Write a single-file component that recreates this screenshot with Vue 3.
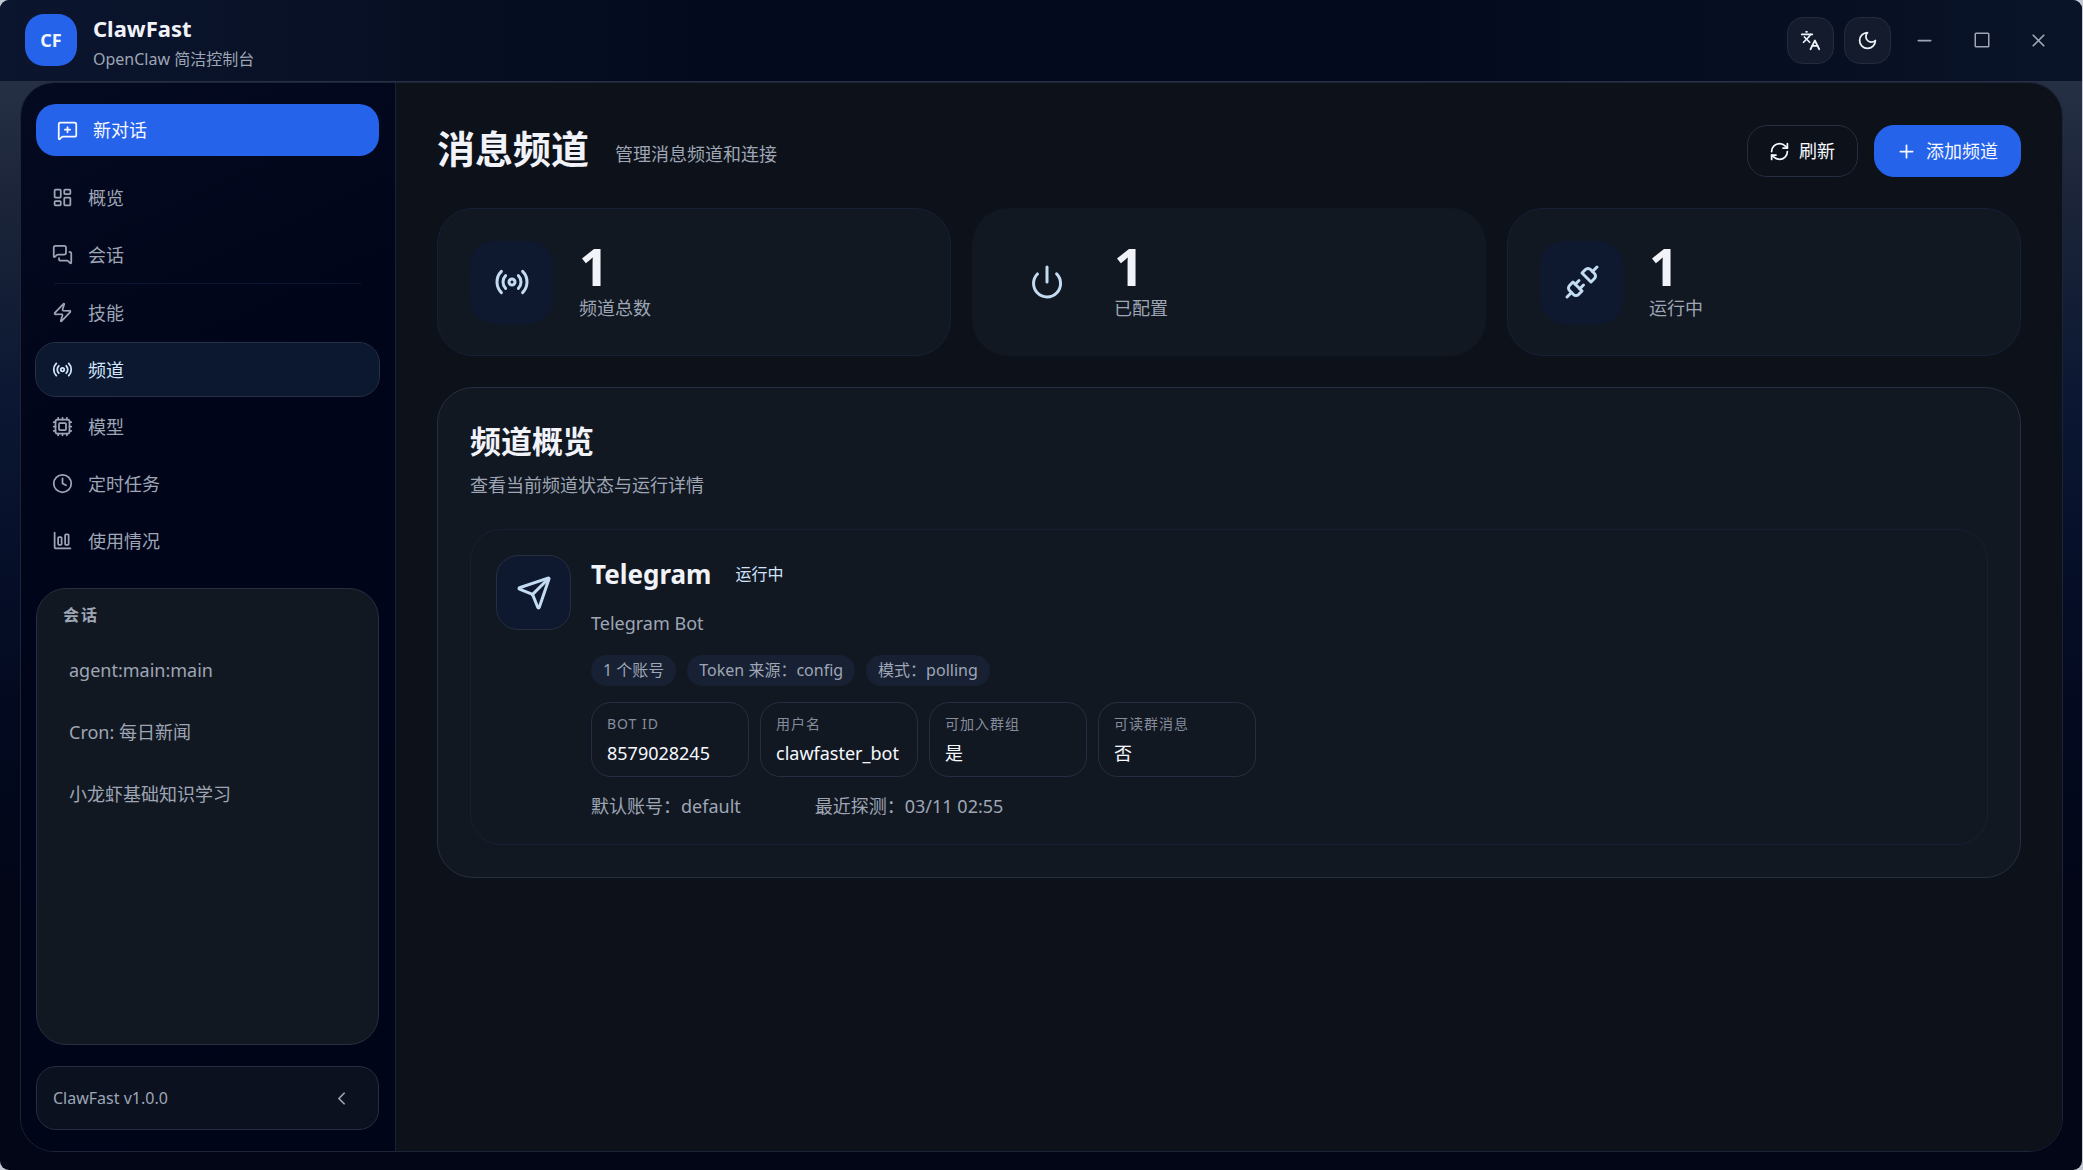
<script setup>
const icons = {
  newChat: ['M22 17a2 2 0 0 1-2 2H6.828a2 2 0 0 0-1.414.586l-2.202 2.202A.71.71 0 0 1 2 21.286V5a2 2 0 0 1 2-2h16a2 2 0 0 1 2 2z', 'M12 8v6', 'M9 11h6'],
  overview: ['M4 3h5a1 1 0 0 1 1 1v7a1 1 0 0 1-1 1H4a1 1 0 0 1-1-1V4a1 1 0 0 1 1-1z', 'M15 3h5a1 1 0 0 1 1 1v3a1 1 0 0 1-1 1h-5a1 1 0 0 1-1-1V4a1 1 0 0 1 1-1z', 'M15 12h5a1 1 0 0 1 1 1v7a1 1 0 0 1-1 1h-5a1 1 0 0 1-1-1v-7a1 1 0 0 1 1-1z', 'M4 16h5a1 1 0 0 1 1 1v3a1 1 0 0 1-1 1H4a1 1 0 0 1-1-1v-3a1 1 0 0 1 1-1z'],
  chats: ['M16 10a2 2 0 0 1-2 2H6.828a2 2 0 0 0-1.414.586l-2.202 2.202A.71.71 0 0 1 2 14.286V4a2 2 0 0 1 2-2h10a2 2 0 0 1 2 2z', 'M20 9a2 2 0 0 1 2 2v10.286a.71.71 0 0 1-1.212.502l-2.202-2.202A2 2 0 0 0 17.172 19H10a2 2 0 0 1-2-2v-1'],
  zap: ['M4 14a1 1 0 0 1-.78-1.63l9.9-10.2a.5.5 0 0 1 .86.46l-1.92 6.02A1 1 0 0 0 13 10h7a1 1 0 0 1 .78 1.63l-9.9 10.2a.5.5 0 0 1-.86-.46l1.92-6.02A1 1 0 0 0 11 14z'],
  radio: ['M16.247 7.761a6 6 0 0 1 0 8.478', 'M19.075 4.933a10 10 0 0 1 0 14.134', 'M4.925 19.067a10 10 0 0 1 0-14.134', 'M7.753 16.239a6 6 0 0 1 0-8.478', 'M14 12a2 2 0 1 1-4 0 2 2 0 0 1 4 0z'],
  cpu: ['M6 4h12a2 2 0 0 1 2 2v12a2 2 0 0 1-2 2H6a2 2 0 0 1-2-2V6a2 2 0 0 1 2-2z', 'M9 8h6a1 1 0 0 1 1 1v6a1 1 0 0 1-1 1H9a1 1 0 0 1-1-1V9a1 1 0 0 1 1-1z', 'M12 20v2', 'M12 2v2', 'M17 20v2', 'M17 2v2', 'M7 20v2', 'M7 2v2', 'M2 12h2', 'M2 17h2', 'M2 7h2', 'M20 12h2', 'M20 17h2', 'M20 7h2'],
  clock: ['M22 12a10 10 0 1 1-20 0 10 10 0 0 1 20 0z', 'M12 6v6l4 2'],
  chart: ['M3 3v16a2 2 0 0 0 2 2h16', 'M16 5h2a1 1 0 0 1 1 1v10a1 1 0 0 1-1 1h-2a1 1 0 0 1-1-1V6a1 1 0 0 1 1-1z', 'M8 8h2a1 1 0 0 1 1 1v7a1 1 0 0 1-1 1H8a1 1 0 0 1-1-1V9a1 1 0 0 1 1-1z'],
  languages: ['m5 8 6 6', 'm4 14 6-6 2-3', 'M2 5h12', 'M7 2h1', 'm22 22-5-10-5 10', 'M14 18h6'],
  moon: ['M12 3a6 6 0 0 0 9 9 9 9 0 1 1-9-9Z'],
  minimize: ['M5 12h14'],
  maximize: ['M4 3h16a1 1 0 0 1 1 1v16a1 1 0 0 1-1 1H4a1 1 0 0 1-1-1V4a1 1 0 0 1 1-1z'],
  close: ['M18 6 6 18', 'm6 6 12 12'],
  refresh: ['M3 12a9 9 0 0 1 9-9 9.75 9.75 0 0 1 6.74 2.74L21 8', 'M21 3v5h-5', 'M21 12a9 9 0 0 1-9 9 9.75 9.75 0 0 1-6.74-2.74L3 16', 'M8 16H3v5'],
  plus: ['M5 12h14', 'M12 5v14'],
  power: ['M12 2v10', 'M18.4 6.6a9 9 0 1 1-12.77.04'],
  unplug: ['m19 5 3-3', 'm2 22 3-3', 'M6.3 20.3a2.4 2.4 0 0 0 3.4 0L12 18l-6-6-2.3 2.3a2.4 2.4 0 0 0 0 3.4Z', 'M7.5 13.5 10 11', 'M10.5 16.5 13 14', 'm12 6 6 6 2.3-2.3a2.4 2.4 0 0 0 0-3.4l-2.6-2.6a2.4 2.4 0 0 0-3.4 0Z'],
  send: ['M14.536 21.686a.5.5 0 0 0 .937-.024l6.5-19a.496.496 0 0 0-.635-.635l-19 6.5a.5.5 0 0 0-.024.937l7.93 3.18a2 2 0 0 1 1.112 1.11z', 'm21.854 2.147-10.94 10.939'],
  chevron: ['m15 18-6-6 6-6'],
}

const nav = [
  { icon: 'overview', label: '概览' },
  { icon: 'chats', label: '会话', divider: true },
  { icon: 'zap', label: '技能' },
  { icon: 'radio', label: '频道', active: true },
  { icon: 'cpu', label: '模型' },
  { icon: 'clock', label: '定时任务' },
  { icon: 'chart', label: '使用情况' },
]

const sessions = ['agent:main:main', 'Cron: 每日新闻', '小龙虾基础知识学习']

const windowButtons = [
  { icon: 'languages', label: '切换语言', framed: true },
  { icon: 'moon', label: '切换主题', framed: true },
  { icon: 'minimize', label: '最小化' },
  { icon: 'maximize', label: '最大化' },
  { icon: 'close', label: '关闭' },
]

const stats = [
  { icon: 'radio', value: 1, label: '频道总数', tinted: true },
  { icon: 'power', value: 1, label: '已配置' },
  { icon: 'unplug', value: 1, label: '运行中', tinted: true },
]

const chips = ['1 个账号', 'Token 来源：config', '模式：polling']

const facts = [
  { label: 'BOT ID', value: '8579028245' },
  { label: '用户名', value: 'clawfaster_bot' },
  { label: '可加入群组', value: '是' },
  { label: '可读群消息', value: '否' },
]
</script>

<template>
  <div class="window">
    <header class="titlebar">
      <div class="logo">CF</div>
      <div class="brand">
        <strong>ClawFast</strong>
        <span>OpenClaw 简洁控制台</span>
      </div>
      <div class="window-actions">
        <button
          v-for="b in windowButtons"
          :key="b.icon"
          type="button"
          class="window-btn"
          :class="[{ framed: b.framed }, b.icon]"
          :aria-label="b.label"
        >
          <svg class="icon" viewBox="0 0 24 24"><path v-for="d in icons[b.icon]" :key="d" :d="d" /></svg>
        </button>
      </div>
    </header>

    <div class="frame">
      <aside class="sidebar">
        <button type="button" class="new-chat">
          <svg class="icon" viewBox="0 0 24 24"><path v-for="d in icons.newChat" :key="d" :d="d" /></svg>
          新对话
        </button>

        <nav class="nav">
          <template v-for="n in nav" :key="n.label">
            <a href="#" class="nav-item" :class="{ active: n.active }">
              <svg class="icon" viewBox="0 0 24 24"><path v-for="d in icons[n.icon]" :key="d" :d="d" /></svg>
              {{ n.label }}
            </a>
            <div v-if="n.divider" class="nav-divider"></div>
          </template>
        </nav>

        <section class="sessions">
          <h2>会话</h2>
          <a v-for="s in sessions" :key="s" href="#">{{ s }}</a>
        </section>

        <footer class="version">
          <span>ClawFast v1.0.0</span>
          <button type="button" aria-label="收起侧栏">
            <svg class="icon" viewBox="0 0 24 24"><path v-for="d in icons.chevron" :key="d" :d="d" /></svg>
          </button>
        </footer>
      </aside>

      <main class="page">
        <div class="page-head">
          <h1>消息频道</h1>
          <p>管理消息频道和连接</p>
          <div class="page-actions">
            <button type="button" class="btn">
              <svg class="icon" viewBox="0 0 24 24"><path v-for="d in icons.refresh" :key="d" :d="d" /></svg>
              刷新
            </button>
            <button type="button" class="btn primary">
              <svg class="icon" viewBox="0 0 24 24"><path v-for="d in icons.plus" :key="d" :d="d" /></svg>
              添加频道
            </button>
          </div>
        </div>

        <div class="stats">
          <div v-for="s in stats" :key="s.label" class="stat" :class="{ tinted: s.tinted }">
            <div class="stat-icon">
              <svg class="icon large" viewBox="0 0 24 24"><path v-for="d in icons[s.icon]" :key="d" :d="d" /></svg>
            </div>
            <div class="stat-text">
              <strong>{{ s.value }}</strong>
              <span>{{ s.label }}</span>
            </div>
          </div>
        </div>

        <section class="overview">
          <h2>频道概览</h2>
          <p>查看当前频道状态与运行详情</p>

          <article class="channel">
            <div class="channel-icon">
              <svg class="icon large" viewBox="0 0 24 24"><path v-for="d in icons.send" :key="d" :d="d" /></svg>
            </div>
            <div class="channel-body">
              <div class="channel-title">
                <h3>Telegram</h3>
                <span>运行中</span>
              </div>
              <p class="channel-desc">Telegram Bot</p>
              <ul class="chips">
                <li v-for="c in chips" :key="c">{{ c }}</li>
              </ul>
              <dl class="facts">
                <div v-for="f in facts" :key="f.label">
                  <dt>{{ f.label }}</dt>
                  <dd>{{ f.value }}</dd>
                </div>
              </dl>
              <div class="channel-meta">
                <span>默认账号：default</span>
                <span>最近探测：03/11 02:55</span>
              </div>
            </div>
          </article>
        </section>
      </main>
    </div>
  </div>
</template>

<style>
html {
  background: #c3c8d2;
}
body {
  margin: 0;
}
</style>

<style scoped>
* {
  box-sizing: border-box;
}
h1, h2, h3, p, ul, dl, dd {
  margin: 0;
  padding: 0;
}
button {
  font: inherit;
  color: inherit;
  background: none;
  border: 0;
  padding: 0;
}
a {
  color: inherit;
  text-decoration: none;
}
.icon {
  width: 21px;
  height: 21px;
  flex: none;
  fill: none;
  stroke: currentColor;
  stroke-width: 2;
  stroke-linecap: round;
  stroke-linejoin: round;
}
.icon.large {
  width: 36px;
  height: 36px;
}

.window {
  display: flex;
  flex-direction: column;
  min-height: 100vh;
  margin-right: 1px;
  border-radius: 9px;
  overflow: hidden;
  font-family: "Noto Sans", "Noto Sans CJK SC", sans-serif;
  font-size: 18px;
  line-height: 26px;
  color: #9ea6b5;
  background: linear-gradient(180deg, #263044 82px, #1b2438 200px, #0b1733 400px, #07102a 540px, #030a20 700px, #020617 900px);
}

.titlebar {
  display: flex;
  align-items: center;
  height: 82px;
  padding: 0 20px 1px 25px;
  border-bottom: 1px solid #262f44;
  background: linear-gradient(90deg, #0b152e 0, #071023 420px, #030a1e 700px, #030a1e 68%, #071023 88%, #0a1428 100%);
}
.logo {
  display: grid;
  place-items: center;
  width: 52px;
  height: 52px;
  margin-right: 16px;
  border-radius: 19px;
  background: #2563eb;
  color: #f1f5f9;
  font-weight: 700;
}
.brand {
  display: flex;
  flex-direction: column;
  gap: 3px;
  padding-top: 4px;
}
.brand strong {
  color: #f1f3f9;
  font-size: 22px;
  line-height: 30px;
}
.brand span {
  font-size: 16px;
}
.window-actions {
  display: flex;
  gap: 10px;
  margin-left: auto;
}
.window-btn {
  display: grid;
  place-items: center;
  width: 47px;
  height: 47px;
  border-radius: 16px;
}
.window-btn.framed {
  border: 1px solid #232b3d;
  background: #131b2c;
  color: #eef2f9;
}
.window-btn.maximize .icon {
  width: 18px;
  height: 18px;
}

.frame {
  display: flex;
  flex: 1;
  margin: 0 19px 18px 20px;
  border: 1px solid #1c2437;
  border-radius: 34px;
  overflow: hidden;
}
.sidebar {
  display: flex;
  flex-direction: column;
  flex: none;
  width: 375px;
  padding: 21px 16px 21px 15px;
  border-right: 1px solid #1a2234;
  background: linear-gradient(155deg, #040a20 0, #01051a 360px, #010518 100%);
}
.new-chat {
  display: flex;
  align-items: center;
  gap: 15px;
  height: 52px;
  margin-bottom: 15px;
  padding: 0 21px;
  border-radius: 20px;
  background: #2563eb;
  color: #f6f9ff;
}
.nav {
  display: flex;
  flex-direction: column;
  gap: 4px;
}
.nav-item {
  display: flex;
  align-items: center;
  gap: 15px;
  height: 53px;
  padding: 0 16px;
  border-radius: 20px;
}
.nav-item.active {
  outline: 1px solid #263146;
  background: #0c1730;
  color: #d3e6fb;
}
.nav-divider {
  height: 1px;
  margin: -2px 18px;
  background: #0b1631;
}
.sessions {
  flex: 1;
  display: flex;
  flex-direction: column;
  margin: 21px 0;
  padding: 14px 16px;
  border: 1px solid #262e40;
  border-radius: 30px;
  background: #121822;
}
.sessions h2 {
  padding: 0 10px;
  font-size: 16px;
  font-weight: 700;
  line-height: 24px;
  letter-spacing: 2px;
  margin-bottom: 12px;
}
.sessions a {
  padding: 18px 16px;
}
.version {
  display: flex;
  align-items: center;
  justify-content: space-between;
  height: 64px;
  padding: 0 26px 0 16px;
  border: 1px solid #262e40;
  border-radius: 20px;
  background: #0b111f;
  font-size: 16px;
}
.version button {
  display: grid;
}

.page {
  flex: 1;
  min-width: 0;
  padding: 42px 41px;
  background: #0d1119;
}
.page-head {
  display: flex;
  align-items: center;
  gap: 26px;
  margin-bottom: 31px;
}
.page-head h1 {
  padding-bottom: 6px;
  color: #f1f3f9;
  font-size: 38px;
  line-height: 46px;
}
.page-head p {
  padding-top: 6px;
}
.page-actions {
  display: flex;
  gap: 16px;
  margin-left: auto;
}
.btn {
  display: flex;
  align-items: center;
  gap: 9px;
  height: 52px;
  padding: 0 22px 0 21px;
  border: 1px solid #262e42;
  border-radius: 20px;
  color: #f6f9ff;
}
.btn.primary {
  border-color: #2563eb;
  background: #2563eb;
}

.stats {
  display: grid;
  grid-template-columns: repeat(3, 1fr);
  gap: 21px;
  margin-bottom: 31px;
}
.stat {
  display: flex;
  align-items: center;
  gap: 26px;
  padding: 28px 32px;
  border: 1px solid #121822;
  border-radius: 36px;
  background: #121822;
}
.stat.tinted {
  border-color: #162138;
}
.stat-icon {
  display: grid;
  place-items: center;
  width: 83px;
  height: 83px;
  border-radius: 24px;
  color: #c3dcf2;
}
.stat.tinted .stat-icon {
  background: #0e182e;
}
.stat-text {
  display: flex;
  flex-direction: column;
  padding-bottom: 6px;
}
.stat-text strong {
  color: #f1f3f9;
  font-size: 52px;
  line-height: 58px;
}

.overview {
  padding: 32px;
  border: 1px solid #262e40;
  border-radius: 36px;
  background: #121822;
}
.overview h2 {
  color: #f1f3f9;
  font-size: 31px;
  line-height: 42px;
  margin-bottom: 10px;
}
.channel {
  display: flex;
  gap: 20px;
  margin-top: 31px;
  padding: 25px;
  border: 1px solid #171f33;
  border-radius: 31px;
}
.channel-icon {
  display: grid;
  place-items: center;
  flex: none;
  width: 75px;
  height: 75px;
  border: 1px solid #262e40;
  border-radius: 22px;
  background: #0e182e;
  color: #c3dcf2;
}
.channel-title {
  display: flex;
  align-items: center;
  gap: 24px;
}
.channel-title h3 {
  color: #f1f3f9;
  font-size: 26px;
  line-height: 38px;
}
.channel-title span {
  color: #cfe3fa;
  font-size: 16px;
}
.channel-desc {
  margin: 17px 0 19px;
}
.chips {
  display: flex;
  gap: 11px;
  list-style: none;
  font-size: 16px;
}
.chips li {
  padding: 2px 12px 3px;
  border-radius: 16px;
  background: #182033;
}
.facts {
  display: grid;
  grid-template-columns: repeat(4, 158px);
  gap: 11px;
  margin: 16px 0;
}
.facts div {
  height: 75px;
  padding: 10px 15px;
  border: 1px solid #262e42;
  border-radius: 20px;
}
.facts dt {
  font-size: 14px;
  line-height: 22px;
  letter-spacing: 1px;
  color: #858d9d;
}
.facts dd {
  margin-top: 5px;
  color: #f6f9ff;
  line-height: 26px;
}
.channel-meta {
  display: flex;
  gap: 74px;
}
</style>
